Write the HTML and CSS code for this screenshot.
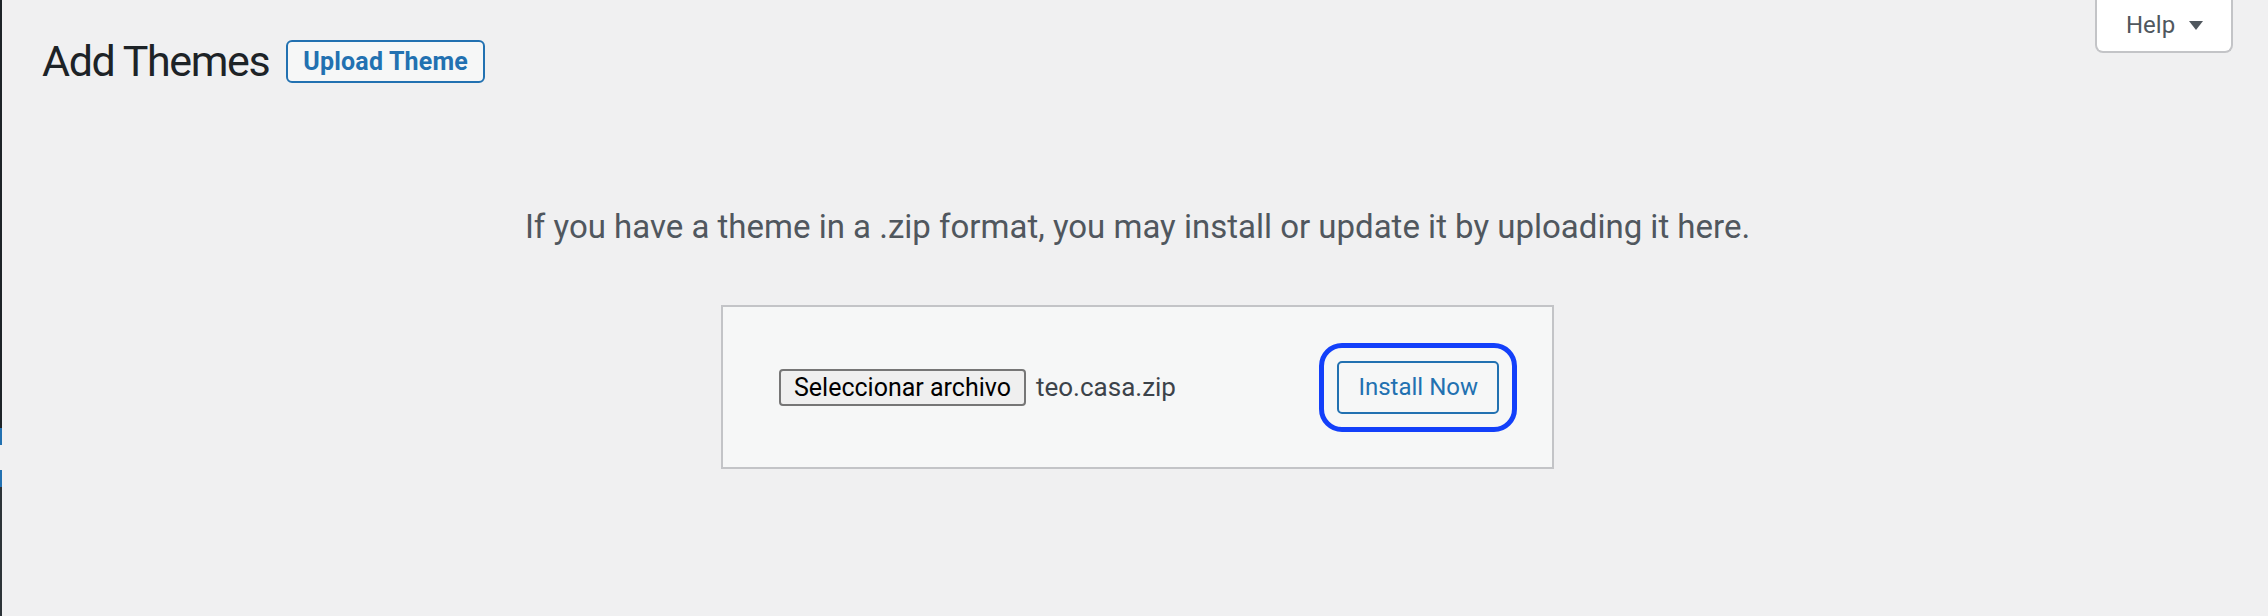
FILE: index.html
```html
<!DOCTYPE html>
<html lang="en">
<head>
<meta charset="utf-8">
<title>Add Themes</title>
<link rel="stylesheet" href="styles.css">
</head>
<body>
<div class="page">
  <div class="menu-edge">
    <span class="seg seg-dark"></span>
    <span class="seg seg-blue"></span>
    <span class="seg seg-gap"></span>
    <span class="seg seg-blue2"></span>
    <span class="seg seg-dark2"></span>
  </div>
  <main class="main">
    <div class="screen-meta-links">
      <button class="help-tab" type="button">Help
        <svg class="caret" width="14" height="9" viewBox="0 0 14 9"><path d="M0 0 H14 L7 9 Z" fill="#50575e"/></svg>
      </button>
    </div>
    <div class="title-row">
      <h1 class="title">Add Themes</h1>
      <button class="upload-btn" type="button">Upload Theme</button>
    </div>
    <section class="upload-section">
      <p class="install-help">If you have a theme in a .zip format, you may install or update it by uploading it here.</p>
      <form class="upload-form">
        <div class="file-group">
          <button class="file-btn" type="button">Seleccionar archivo</button>
          <span class="file-name">teo.casa.zip</span>
        </div>
        <button class="install-btn" type="button">Install Now</button>
      </form>
    </section>
  </main>
</div>
</body>
</html>
```
FILE: styles.css
```css
html, body {
  margin: 0;
  padding: 0;
  background: #f0f0f1;
  font-family: Roboto, "Liberation Sans", sans-serif;
}

.page {
  display: flex;
  min-height: 616px;
}

.menu-edge {
  width: 2px;
  display: flex;
  flex-direction: column;
  flex-shrink: 0;
}

.seg { display: block; }
.seg-dark { height: 428px; background: #1d2327; }
.seg-blue { height: 17px; background: #2271b1; }
.seg-gap { height: 25px; background: #f0f0f1; }
.seg-blue2 { height: 17px; background: #2271b1; }
.seg-dark2 { flex: 1; background: #2c3338; }

.main {
  flex: 1;
  padding: 0 35px 0 40px;
  box-sizing: border-box;
}

.screen-meta-links {
  float: right;
}

.help-tab {
  display: flex;
  align-items: flex-start;
  box-sizing: border-box;
  width: 138px;
  height: 53px;
  padding: 13px 0 0 29px;
  margin: 0;
  background: #fff;
  border: 2px solid #c3c4c7;
  border-top: 0;
  border-radius: 0 0 8px 8px;
  font-family: Roboto, "Liberation Sans", sans-serif;
  font-size: 24px;
  line-height: 24px;
  color: #50575e;
}

.caret {
  margin: 8px 0 0 14px;
}

.title-row {
  display: flex;
  align-items: center;
  gap: 17px;
  margin-top: 40px;
}

.title {
  margin: 0;
  font-size: 43px;
  line-height: 43px;
  font-weight: 400;
  letter-spacing: -1.4px;
  color: #1d2327;
}

.upload-btn {
  box-sizing: border-box;
  height: 43px;
  padding: 0 15px;
  background: #f6f7f7;
  border: 2px solid #2271b1;
  border-radius: 6px;
  color: #2271b1;
  font-family: Roboto, "Liberation Sans", sans-serif;
  font-size: 25px;
  font-weight: 700;
  letter-spacing: 0.2px;
}

.upload-section {
  display: flex;
  flex-direction: column;
  align-items: center;
  padding-top: 122px;
}

.install-help {
  margin: 0;
  font-size: 33px;
  line-height: 44px;
  letter-spacing: 0;
  color: #50575e;
}

.upload-form {
  box-sizing: border-box;
  margin: 56px 0 0;
  width: 833px;
  height: 164px;
  padding: 0 53px 0 56px;
  display: flex;
  align-items: center;
  justify-content: space-between;
  background: #f6f7f7;
  border: 2px solid #c3c4c7;
}

.file-group {
  display: flex;
  align-items: center;
  gap: 10px;
}

.file-btn {
  box-sizing: border-box;
  height: 37px;
  padding: 0 13px;
  background: #efefef;
  border: 2px solid #767676;
  border-radius: 4px;
  color: #000;
  font-family: Roboto, "Liberation Sans", sans-serif;
  font-size: 25px;
}

.file-name {
  font-size: 26px;
  color: #3c434a;
}

.install-btn {
  box-sizing: border-box;
  height: 53px;
  padding: 0 19px;
  background: #f6f7f7;
  border: 2px solid #2271b1;
  border-radius: 5px;
  color: #2271b1;
  font-family: Roboto, "Liberation Sans", sans-serif;
  font-size: 24px;
  outline: 5px solid #1340fa;
  outline-offset: 13px;
}
```
